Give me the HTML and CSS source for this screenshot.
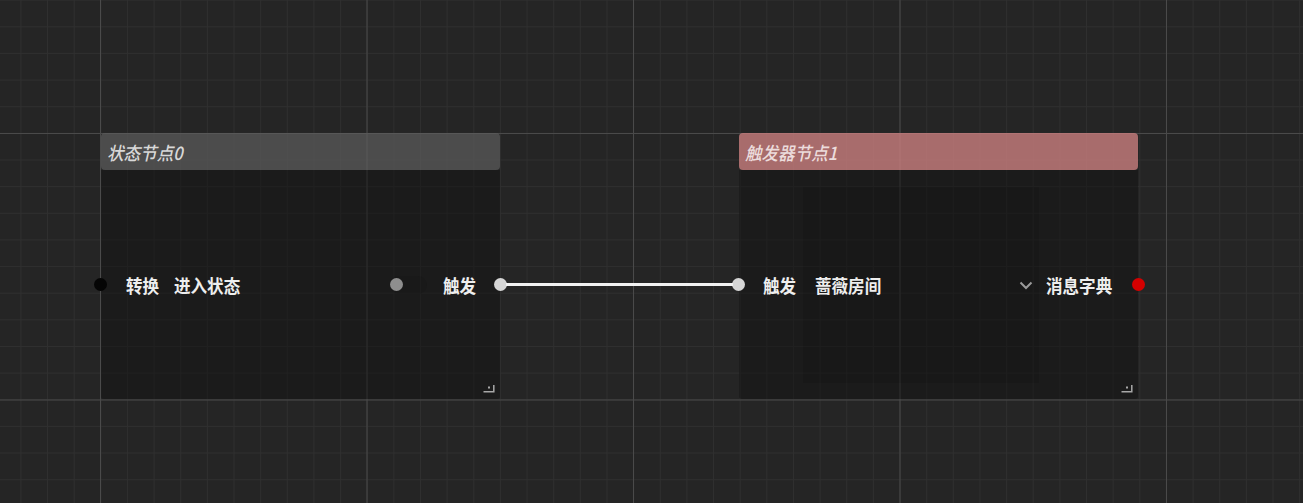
FILE: index.html
```html
<!DOCTYPE html>
<html lang="zh">
<head>
<meta charset="utf-8">
<title>节点图</title>
<link rel="stylesheet" href="styles.css">
</head>
<body>
<div class="canvas">
  <div class="node node-a">
    <div class="node-header header-gray"><span class="title">状态节点0</span></div>
    <div class="node-body">
      <div class="row">
        <span class="port port-black port-left"></span>
        <span class="label label-a1">转换</span>
        <span class="label label-a2">进入状态</span>
        <span class="spacer"></span>
        <span class="pill"><span class="pill-dot"></span></span>
        <span class="label label-a3">触发</span>
        <span class="port port-white port-right"></span>
      </div>
      <svg class="resize" width="12" height="9" viewBox="0 0 12 9"><path d="M0.5 7.8 H10.8 V1" fill="none" stroke="#a8a8a8" stroke-width="1.5"/><rect x="5" y="2.5" width="2" height="2" fill="#a8a8a8"/></svg>
    </div>
  </div>

  <div class="node node-b">
    <div class="node-header header-red"><span class="title">触发器节点1</span></div>
    <div class="node-body">
      <div class="row">
        <span class="port port-white port-left"></span>
        <span class="label label-b1">触发</span>
        <div class="select">
          <span class="label">蔷薇房间</span>
          <svg class="chevron" width="14" height="9" viewBox="0 0 14 9"><path d="M1.5 1.5 L7 7 L12.5 1.5" fill="none" stroke="#9a9a9a" stroke-width="2"/></svg>
        </div>
        <span class="label label-b3">消息字典</span>
        <span class="port port-red port-right"></span>
      </div>
      <svg class="resize" width="12" height="9" viewBox="0 0 12 9"><path d="M0.5 7.8 H10.8 V1" fill="none" stroke="#a8a8a8" stroke-width="1.5"/><rect x="5" y="2.5" width="2" height="2" fill="#a8a8a8"/></svg>
    </div>
  </div>

  <div class="wire"></div>
</div>
</body>
</html>
```

FILE: styles.css
```css
html, body {
  margin: 0;
  padding: 0;
  width: 100%;
  height: 100%;
  overflow: hidden;
}
body {
  background: #252525;
  font-family: "Noto Sans CJK SC", "Noto Sans", sans-serif;
  color: #e6e6e6;
}
.canvas {
  position: relative;
  width: 1303px;
  height: 503px;
  background-color: #252525;
  background-image:
    linear-gradient(to right, #4a4a4a 0, #4a4a4a 1px, transparent 1px),
    linear-gradient(to bottom, #4a4a4a 0, #4a4a4a 1px, transparent 1px),
    linear-gradient(to right, #2f2f2f 0, #2f2f2f 1px, transparent 1px),
    linear-gradient(to bottom, #2f2f2f 0, #2f2f2f 1px, transparent 1px);
  background-size: 266.5px 266.5px, 266.5px 266.5px, 26.65px 26.65px, 26.65px 26.65px;
  background-position: 100px 133px, 100px 133px, 20.4px 26.3px, 20.4px 26.3px;
}
.node {
  position: absolute;
  top: 133px;
  width: 399px;
  height: 266px;
  display: flex;
  flex-direction: column;
}
.node-a { left: 101px; }
.node-b { left: 739px; }
.node-header {
  height: 37px;
  flex: none;
  border-radius: 4px;
  display: flex;
  align-items: center;
  padding-left: 6px;
}
.title {
  display: inline-block;
  font-size: 18px;
  font-weight: 500;
  font-style: italic;
  line-height: 22px;
  transform: scaleX(0.92);
  transform-origin: left center;
  white-space: nowrap;
}
.header-gray {
  background: rgba(92, 92, 92, 0.7);
  color: #d8d8d8;
}
.header-red {
  background: rgba(205, 128, 128, 0.78);
  color: #ecdcdc;
}
.node-body {
  flex: 1;
  position: relative;
  display: flex;
  align-items: center;
  background: rgba(18, 18, 18, 0.5);
  border-radius: 0 0 3px 3px;
}
.row {
  width: 100%;
  display: flex;
  align-items: center;
}
.label {
  display: inline-block;
  font-size: 18px;
  font-weight: 700;
  line-height: 22px;
  color: #eeeeee;
  white-space: nowrap;
  transform: scaleX(0.92);
  transform-origin: left center;
}
.spacer { flex: 1; }
.port {
  width: 13px;
  height: 13px;
  border-radius: 50%;
  flex: none;
}
.port-left { margin-left: -7px; }
.port-right { margin-right: -6.5px; }
.port-black { background: #050505; }
.port-white { background: #d6d6d6; }
.port-red { background: #d40000; }
.label-a1 { margin-left: 19px; }
.label-a2 { margin-left: 12px; }
.pill {
  width: 37px;
  height: 18px;
  border-radius: 9px;
  background: rgba(20, 20, 20, 0.25);
  display: flex;
  align-items: center;
}
.pill-dot {
  width: 13px;
  height: 13px;
  border-radius: 50%;
  background: #8e8e8e;
}
.label-a3 { margin-left: 16px; margin-right: 14.5px; }
.label-b1 { margin-left: 17.5px; margin-right: 4px; }
.select {
  flex: 1;
  height: 196px;
  display: flex;
  align-items: center;
  justify-content: space-between;
  padding: 0 6px 0 12px;
  background: rgba(0, 0, 0, 0.09);
}
.chevron { display: block; margin-top: 2px; }
.label-b3 { margin-left: 7px; margin-right: 13.5px; }
.resize {
  position: absolute;
  right: 5px;
  bottom: 6px;
  display: block;
}
.wire {
  position: absolute;
  left: 506px;
  top: 283px;
  width: 227px;
  height: 3px;
  background: #f2f2f2;
}
```
